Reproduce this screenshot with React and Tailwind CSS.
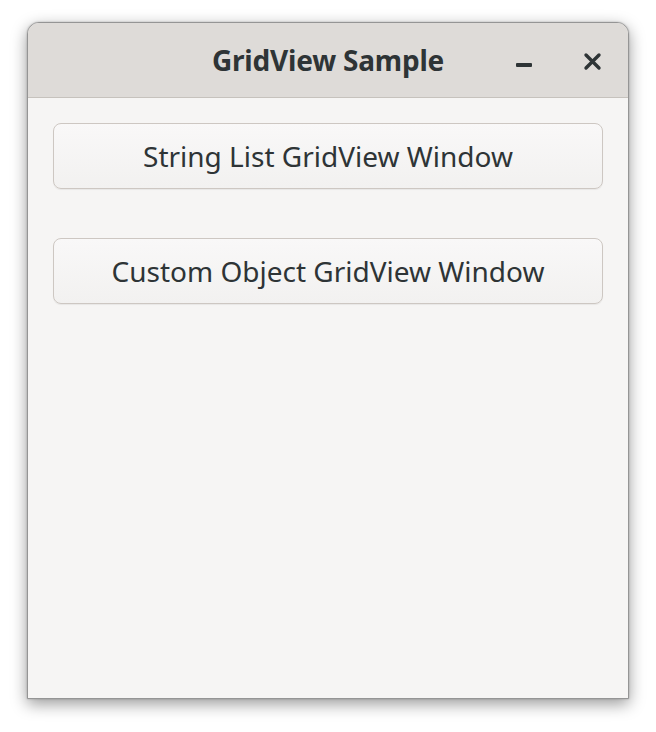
export default function App() {
  return (
    <div className="w-[656px] h-[732px] bg-white pl-[27px] pt-[22px]" style={{ fontFamily: '"Noto Sans", "Open Sans", sans-serif' }}>
      <div className="w-[602px] h-[677px] flex flex-col border border-[#959595] rounded-t-[12px] bg-[#f6f5f4] shadow-[0_5px_16px_rgba(0,0,0,0.4),0_0_2px_rgba(0,0,0,0.25)] overflow-hidden">
        <div className="relative h-[75px] shrink-0 flex items-center justify-center bg-[#dedbd8] border-b border-[#c6c2bd]">
          <span className="text-[28px] font-bold text-[#2e3436] tracking-[-0.2px]">GridView Sample</span>
          <div className="absolute left-[488px] top-[40px] w-[16px] h-[4px] bg-[#2e3436] rounded-[1px]" />
          <svg className="absolute left-[555px] top-[29px]" width="19" height="19" viewBox="0 0 19 19">
            <path d="M3 3 L16 16 M16 3 L3 16" stroke="#2e3436" strokeWidth="3.4" strokeLinecap="round" />
          </svg>
        </div>
        <div className="flex flex-col gap-[49px] px-[25px] pt-[25px]">
          <button className="h-[66px] rounded-[8px] border border-[#cdc7c2] bg-gradient-to-b from-[#f9f8f8] to-[#f2f1f0] shadow-[0_1px_1px_rgba(0,0,0,0.06)] text-[28px] text-[#2e3436]">
            String List GridView Window
          </button>
          <button className="h-[66px] rounded-[8px] border border-[#cdc7c2] bg-gradient-to-b from-[#f9f8f8] to-[#f2f1f0] shadow-[0_1px_1px_rgba(0,0,0,0.06)] text-[28px] text-[#2e3436]">
            Custom Object GridView Window
          </button>
        </div>
      </div>
    </div>
  );
}
